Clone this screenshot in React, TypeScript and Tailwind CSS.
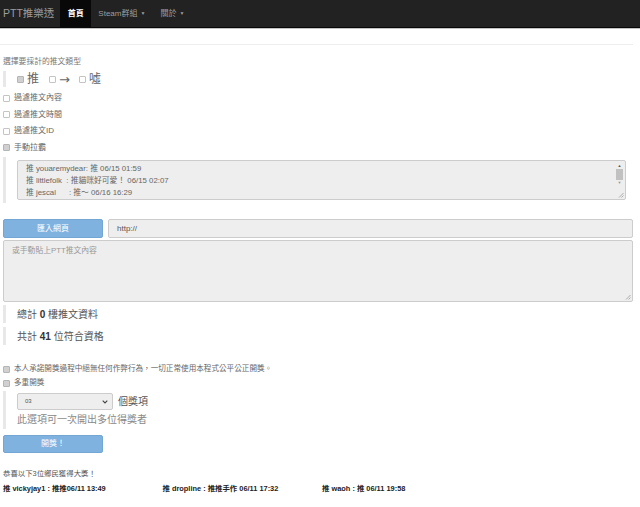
import React from 'react';

const Box = ({ checked = false }: { checked?: boolean }) => (
  <span
    className={
      'inline-block w-[7px] h-[7px] shrink-0 rounded-[1px] border ' +
      (checked ? 'bg-[#d0d0d0] border-[#b5b5b5]' : 'bg-white border-[#c4c4c4]')
    }
  />
);

const CheckRow = ({ label, checked = false }: { label: string; checked?: boolean }) => (
  <div className="h-[16.5px] flex items-center gap-[4px] pl-[3px] text-[8px] text-[#666]">
    <Box checked={checked} />
    <span>{label}</span>
  </div>
);

const Grip = () => (
  <svg width="6" height="6" viewBox="0 0 6 6" className="absolute right-[1px] bottom-[1px]">
    <path d="M5.5 1 L1 5.5 M5.5 3.5 L3.5 5.5" stroke="#999" strokeWidth="0.8" />
  </svg>
);

const comments = [
  '推 youaremydear: 推 06/15 01:59',
  '推 littlefolk  : 推貓咪好可愛！ 06/15 02:07',
  '推 jescal      : 推～ 06/16 16:29',
];

const winners = [
  '推 vickyjay1 : 推推06/11 13:49',
  '推 dropline : 推推手作 06/11 17:32',
  '推 waoh : 推 06/11 19:58',
];

export default function App() {
  return (
    <div className="min-h-[507px] bg-white text-[#333] font-['Liberation_Sans','Noto_Sans_CJK_TC',sans-serif]">
      {/* navbar */}
      <nav className="h-[28px] bg-[#222] border-b border-[#080808] shadow-[0_1px_0_#c4c4c4] flex items-stretch">
        <span className="pl-[3px] pr-[6px] flex items-center text-[10.5px] text-[#9d9d9d]">PTT推樂透</span>
        <span className="w-[31px] bg-[#080808] flex items-center justify-center text-[8px] font-bold text-white">首頁</span>
        <span className="pl-[7px] pr-[8px] flex items-center gap-[3px] text-[8px] text-[#9d9d9d]">
          Steam群組 <span className="text-[5px]">▼</span>
        </span>
        <span className="px-[7px] flex items-center gap-[3px] text-[8px] text-[#9d9d9d]">
          關於 <span className="text-[5px]">▼</span>
        </span>
      </nav>

      <div className="mt-[16px] mr-[7px] border-t border-[#eee]" />

      <div className="pl-[3px] pr-[7px]">
        <div className="mt-[11px] text-[7.8px] leading-[11px] text-[#777]">選擇要採計的推文類型</div>

        <div className="mt-[4px] h-[16px] border-l-[3px] border-[#e8e8e8] pl-[11px] flex items-center text-[12px] text-[#666]">
          <Box checked />
          <span className="ml-[3px]">推</span>
          <span className="ml-[10px]"><Box /></span>
          <span className="ml-[3px] text-[13px] leading-none font-['DejaVu_Sans',sans-serif]">→</span>
          <span className="ml-[9px]"><Box /></span>
          <span className="ml-[3px]">噓</span>
        </div>
      </div>

      <div className="mt-[3px]">
        <CheckRow label="過濾推文內容" />
        <CheckRow label="過濾推文時間" />
        <CheckRow label="過濾推文ID" />
        <CheckRow label="手動拉霸" checked />
      </div>

      <div className="pl-[3px] pr-[7px]">
        <div className="mt-[1px] border-l-[3px] border-[#e8e8e8] pl-[11px] pr-[7px] py-[3px]">
          <div className="relative h-[40px] bg-[#eee] border border-[#ccc] rounded-[2px] flex">
            <div className="flex-1 pl-[8px] pt-[2px] text-[7.8px] leading-[12px] text-[#666] whitespace-pre overflow-hidden">
              {comments.map((c) => (
                <div key={c}>{c}</div>
              ))}
            </div>
            <div className="w-[9px] mr-[1px] flex flex-col items-center pt-[2px]">
              <span className="text-[4px] leading-[6px] text-[#555]">▲</span>
              <span className="w-[7px] h-[11px] bg-[#c1c1c1]" />
              <span className="text-[4px] leading-[6px] text-[#999]">▼</span>
            </div>
            <Grip />
          </div>
        </div>

        <div className="mt-[16px] flex gap-[5px] h-[19px]">
          <button className="w-[100px] rounded-[2px] bg-[#80b2df] border border-[#74a6d4] text-white text-[8px]">匯入網頁</button>
          <div className="flex-1 bg-[#eee] border border-[#ccc] rounded-[2px] flex items-center pl-[8px] text-[8px] text-[#555]">
            http://
          </div>
        </div>

        <div className="relative mt-[2px] h-[62px] bg-[#eee] border border-[#ccc] rounded-[2px] pl-[8px] pt-[4px] text-[7.8px] text-[#999]">
          或手動貼上PTT推文內容
          <Grip />
        </div>

        <div className="mt-[3px] h-[18px] border-l-[3px] border-[#e8e8e8] pl-[11px] flex items-center text-[10px] text-[#555]">
          總計&nbsp;<b className="text-[#333]">0</b>&nbsp;樓推文資料
        </div>
        <div className="mt-[4px] h-[18px] border-l-[3px] border-[#e8e8e8] pl-[11px] flex items-center text-[10px] text-[#555]">
          共計&nbsp;<b className="text-[#333]">41</b>&nbsp;位符合資格
        </div>

        <div className="mt-[17px] h-[14px] flex items-center gap-[4px] text-[7.6px] text-[#666]">
          <Box checked />
          <span>本人承諾開獎過程中絕無任何作弊行為，一切正常使用本程式公平公正開獎。</span>
        </div>
        <div className="h-[14px] flex items-center gap-[4px] text-[7.6px] text-[#666]">
          <Box checked />
          <span>多重開獎</span>
        </div>

        <div className="mt-[1px] border-l-[3px] border-[#e8e8e8] pl-[11px] pt-[2px] pb-[1px]">
          <div className="flex items-center gap-[5px]">
            <div className="w-[96px] h-[17px] bg-[#eee] border border-[#ccc] rounded-[2px] flex items-center justify-between pl-[7px] pr-[4px] text-[6px] text-[#555]">
              <span>03</span>
              <svg width="6" height="4" viewBox="0 0 6 4">
                <path d="M0.7 0.7 L3 3 L5.3 0.7" stroke="#444" strokeWidth="1.1" fill="none" />
              </svg>
            </div>
            <span className="text-[10px] text-[#555]">個獎項</span>
          </div>
          <div className="h-[18px] flex items-center text-[10px] text-[#888]">此選項可一次開出多位得獎者</div>
        </div>

        <button className="mt-[4px] w-[100px] h-[18px] rounded-[2px] bg-[#80b2df] border border-[#74a6d4] text-white text-[8px]">開獎！</button>

        <div className="mt-[15px] text-[7.4px] leading-[12px] text-[#555]">恭喜以下3位鄉民獲得大獎！</div>
        <div className="mt-[3px] flex text-[7.4px] font-bold text-[#222]">
          {winners.map((w) => (
            <div key={w} className="w-[159.5px]">{w}</div>
          ))}
        </div>
      </div>
    </div>
  );
}
